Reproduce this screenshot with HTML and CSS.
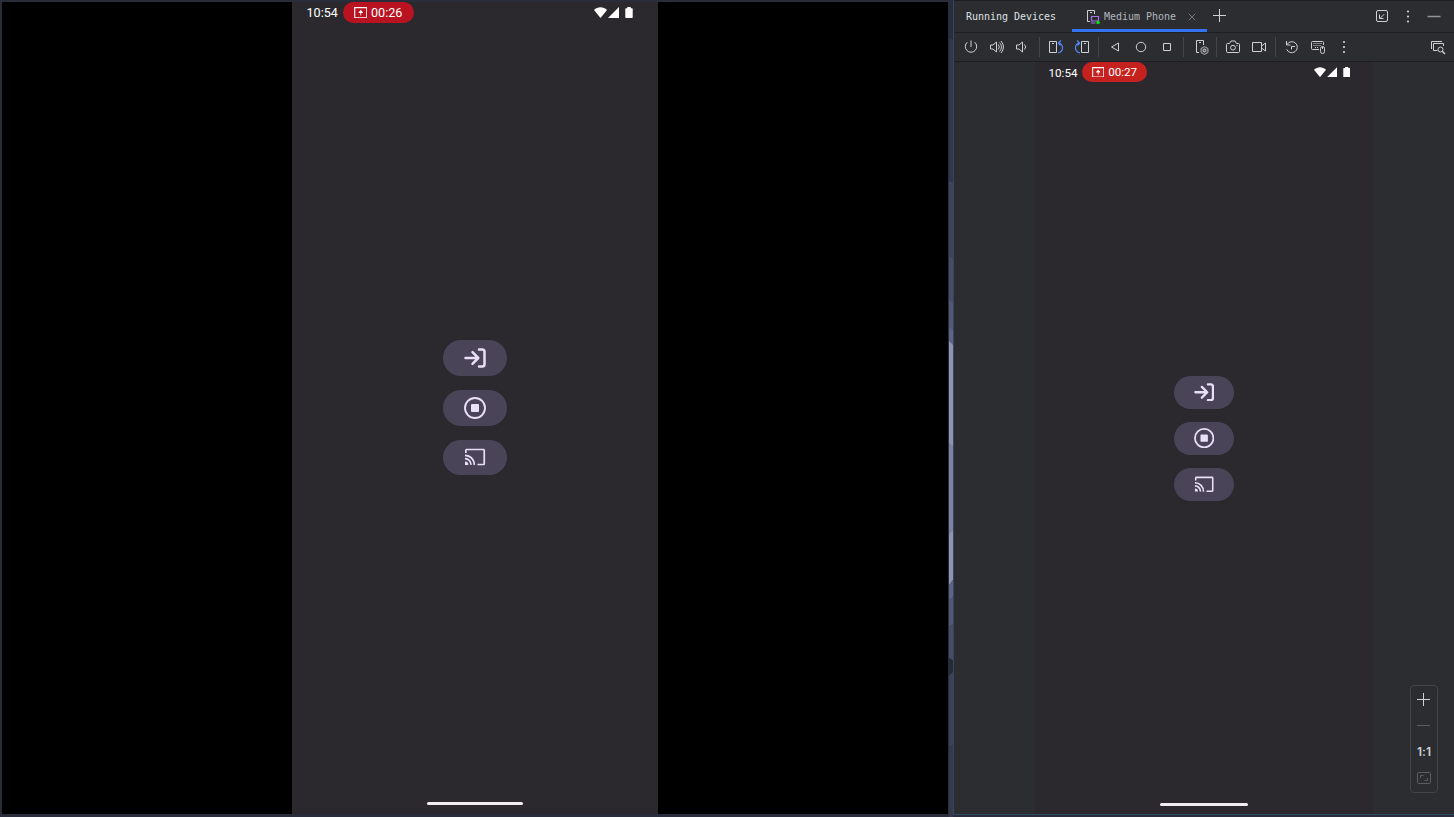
FILE: index.html
```html
<!DOCTYPE html>
<html lang="en">
<head>
<meta charset="utf-8">
<title>Running Devices</title>
<link rel="stylesheet" href="styles.css">
</head>
<body>
<svg class="defs" width="0" height="0">
  <symbol id="share" viewBox="0 0 14 12"><path d="M.7 .7h12.600v10.600H.7z" fill="none" stroke="#fff" stroke-width="1.200"/><path d="M7 3.500V8.800M4.900 5.700 7 3.700l2.100 2z" fill="#fff" stroke="#fff" stroke-width=".9"/></symbol>
  <symbol id="wifi" viewBox="0 0 13 11"><path d="M6.5 11 0 3C3.5-.7 9.5-.7 13 3z" fill="#fff"/></symbol>
  <symbol id="signal" viewBox="0 0 11 11"><path d="M11 0v11H0z" fill="#fff"/></symbol>
  <symbol id="battery" viewBox="0 0 8 11"><path d="M2.3 0h3.4v1.2H7q.7 0 .7.7v8.4q0 .7-.7.7H1q-.7 0-.7-.7V1.900q0-.7.7-.7h1.300z" fill="#fff"/></symbol>
  <symbol id="login" viewBox="0 0 22 20"><g fill="none" stroke="#eadff8" stroke-width="2.500" stroke-linecap="round" stroke-linejoin="round"><path d="M1.500 10H14M8.500 4.200 14.300 10 8.500 15.800M15 1.500h3.200q2.300 0 2.300 2.300v12.400q0 2.300-2.300 2.300H15"/></g></symbol>
  <symbol id="stop" viewBox="0 0 22 22"><circle cx="11" cy="11" r="10" fill="none" stroke="#eadff8" stroke-width="1.900"/><rect x="7" y="7" width="8" height="8" rx="1" fill="#eadff8"/></symbol>
  <symbol id="cast" viewBox="0 0 22 18"><g fill="none" stroke="#eadff8" stroke-width="1.700"><path d="M1.850 5V2.200q0-.7.7-.7h17q.7 0 .7.700v13.600q0 .7-.7.700H13.500"/><path d="M1 7.300A9.200 9.200 0 0 1 10.200 16.900M1 10.700A6 6 0 0 1 7 16.900"/></g><path d="M1 13.600a3.300 3.300 0 0 1 3.300 3.300H1z" fill="#eadff8"/></symbol>
</svg>
<div class="desktop">
  <section class="mirror">
    <div class="screen large">
      <header class="status">
        <span class="clock">10:54</span>
        <span class="rec"><svg class="share"><use href="#share"/></svg><span class="time">00:26</span></span>
        <span class="signals"><svg class="wifi"><use href="#wifi"/></svg><svg class="cell"><use href="#signal"/></svg><svg class="battery"><use href="#battery"/></svg></span>
      </header>
      <main class="actions">
        <button class="action"><svg class="login"><use href="#login"/></svg></button>
        <button class="action"><svg class="stop"><use href="#stop"/></svg></button>
        <button class="action"><svg class="cast"><use href="#cast"/></svg></button>
      </main>
      <div class="navbar"></div>
    </div>
  </section>
  <svg class="wallpaper" width="4" height="817" viewBox="0 0 4 817">
    <path d="M0 0h4v817H0z" fill="#2b2d3d"/>
    <path d="M0 38l4 2v143H0z" fill="#34364a"/>
    <path d="M0 181l4 2v77H0z" fill="#41425c"/>
    <path d="M0 256l4 3v46H0z" fill="#4a4c66"/>
    <path d="M0 300l4 3v30H0z" fill="#555776"/>
    <path d="M0 327l4 3v17H0z" fill="#606385"/>
    <path d="M0 341l4 4v102H0z" fill="#9293b1"/>
    <path d="M0 443l4 3v88H0z" fill="#7f81a2"/>
    <path d="M0 534l4-3v49l-4 5z" fill="#9293b1"/>
    <path d="M0 585l4-5v17l-4 3z" fill="#606385"/>
    <path d="M0 600l4-3v27l-4 3z" fill="#555776"/>
    <path d="M0 627l4-3v37l-4-2z" fill="#4a4c66"/>
    <path d="M0 658l4 2v12l-4 4z" fill="#282a36"/>
    <path d="M0 676l4-4v73l-4 2z" fill="#3f4059"/>
    <path d="M0 747l4-2v72H0z" fill="#36384c"/>
  </svg>
  <section class="ide">
    <header class="tabs">
      <span class="title"><span class="mono">Running Devices</span></span>
      <div class="tab">
        <svg width="16" height="16" viewBox="0 0 16 16" fill="none"><path d="M5 12.500H2.500V1.500h7V5M5 3.500h2" stroke="#ced0d6"/><path d="M6.500 7.500h7v4.500h-7zM6 14h4.500" stroke="#a571e6" stroke-width="1.200"/><circle cx="13" cy="13.500" r="1.800" fill="#0be00b"/></svg>
        <span class="mono">Medium Phone</span>
        <svg class="close" width="8" height="8" viewBox="0 0 8 8"><path d="m.7.7 6.600 6.600m0-6.600L.7 7.300" stroke="#74767b"/></svg>
      </div>
      <svg class="add" width="14" height="14" viewBox="0 0 14 14"><path d="M6.500 0v13M0 6.500h13" stroke="#ced0d6"/></svg>
      <div class="window-tools">
        <svg width="14" height="14" viewBox="0 0 14 14" fill="none" stroke="#ced0d6"><rect x="1.500" y=".5" width="11" height="11" rx="1.500"/><path d="M9.200 4.200l-4 4M4.500 4.500v4H8.500"/></svg>
        <svg width="14" height="14" viewBox="0 0 14 14" fill="#ced0d6"><circle cx="7" cy="1.500" r="1.100"/><circle cx="7" cy="6.500" r="1.100"/><circle cx="7" cy="11.500" r="1.100"/></svg>
        <svg width="14" height="14" viewBox="0 0 14 14"><path d="M.5 6.500h13" stroke="#929498" stroke-width="1.500"/></svg>
      </div>
    </header>
    <nav class="toolbar">
      <svg class="tool" viewBox="0 0 16 16"><path d="M8 1.500v6.500M4.300 3.200a5.700 5.700 0 1 0 7.400 0"/></svg>
      <svg class="tool" viewBox="0 0 16 16"><path d="M1.500 6v4h2.500l3.500 3V3L4 6zM9.300 5.500q2 2.500 0 5M10.500 3.500q4 4.500 0 9M12 2q5 6 0 12"/></svg>
      <svg class="tool tight" viewBox="0 0 16 16"><path d="M2.500 6v4H5l3.500 3V3L5 6zM10.500 5.500q2.500 2.500 0 5"/></svg>
      <i class="sep"></i>
      <svg class="tool" viewBox="0 0 16 16"><path d="M1.500 2.500h7v11h-7zM4 4.500h2"/><path class="blue" d="M10 14q4.500-1 4.500-5.200T10.500 4M13 1.500 10.300 4l2.200 2.700"/></svg>
      <svg class="tool" viewBox="0 0 16 16"><path d="M7.500 2.500h7v11h-7zM10 4.500h2"/><path class="blue" d="M6 14q-4.500-1-4.500-5.200T5.500 4M3 1.500 5.700 4 3.500 6.700"/></svg>
      <i class="sep"></i>
      <svg class="tool" viewBox="0 0 16 16"><path d="M11.500 4v8L4.500 8z"/></svg>
      <svg class="tool" viewBox="0 0 16 16"><circle cx="8" cy="8" r="4.700"/></svg>
      <svg class="tool" viewBox="0 0 16 16"><path d="M4.500 4.500h7v7h-7z"/></svg>
      <i class="sep wide"></i>
      <svg class="tool" viewBox="0 0 16 16"><path d="M6 13.500H3.500v-12h7V6M6 3.500h2"/><path class="gray" d="m11.500 7.500 3.500 2v4l-3.500 2-3.500-2v-4z"/><circle cx="11.500" cy="11.500" r="1.300"/></svg>
      <i class="sep narrow"></i>
      <svg class="tool" viewBox="0 0 16 16"><path d="M2.500 4.500h2l1.500-2.500h4l1.500 2.500h2q1 0 1 1v7q0 1-1 1h-11q-1 0-1-1v-7q0-1 1-1z"/><circle cx="8" cy="8.700" r="2.400"/><path d="M11.500 6.500h1"/></svg>
      <svg class="tool" viewBox="0 0 16 16"><path d="M1.500 3.500h9v9h-9zM10.500 7l4-3v8l-4-3"/></svg>
      <i class="sep"></i>
      <svg class="tool" viewBox="0 0 16 16"><path d="M2.500 2v4h4M3 5.500a5.500 5.500 0 1 1-.3 4.800M11 7.500H7.500V10.500"/></svg>
      <svg class="tool" viewBox="0 0 16 16"><path d="M9 10.500H2.500q-1 0-1-1v-6q0-1 1-1h10q1 0 1 1V6"/><path d="M3.500 4.500h8.500M3.500 6.500h7M5 8.500h4" stroke-dasharray="1 1"/><rect x="10.500" y="7.500" width="4" height="7" rx="2"/><path d="M12.500 8v2"/></svg>
      <svg class="tool dots" viewBox="0 0 16 16"><circle cx="8" cy="3" r="1.100"/><circle cx="8" cy="8" r="1.100"/><circle cx="8" cy="13" r="1.100"/></svg>
      <svg class="tool last" viewBox="0 0 16 16"><path d="M1.500 10V2.500H12M7.500 11.500h-4v-7h10V7"/><circle cx="10.500" cy="10.500" r="2.500"/><path d="m12.300 12.300 2.700 2.700" stroke-width="1.400"/></svg>
    </nav>
    <div class="stage">
      <div class="screen small">
        <header class="status">
          <span class="clock">10:54</span>
          <span class="rec"><svg class="share"><use href="#share"/></svg><span class="time">00:27</span></span>
          <span class="signals"><svg class="wifi"><use href="#wifi"/></svg><svg class="cell"><use href="#signal"/></svg><svg class="battery"><use href="#battery"/></svg></span>
        </header>
        <main class="actions">
          <button class="action"><svg class="login"><use href="#login"/></svg></button>
          <button class="action"><svg class="stop"><use href="#stop"/></svg></button>
          <button class="action"><svg class="cast"><use href="#cast"/></svg></button>
        </main>
        <div class="navbar"></div>
      </div>
      <aside class="zoom">
        <svg width="14" height="14" viewBox="0 0 14 14"><path d="M6.500 0v13M0 6.500h13" stroke="#ced0d6"/></svg>
        <svg width="14" height="14" viewBox="0 0 14 14"><path d="M0 6.500h13" stroke="#5a5d61"/></svg>
        <span class="ratio">1:1</span>
        <svg width="14" height="14" viewBox="0 0 14 14" fill="none" stroke="#5a5d61"><rect x=".5" y="1.500" width="13" height="11" rx="1"/><path d="M3.500 7V4.500H6.500M7.500 9.500h3V7"/></svg>
      </aside>
    </div>
  </section>
</div>
</body>
</html>
```
FILE: styles.css
```css
* { box-sizing: border-box; }
body { margin: 0; background: #2b2d3d; overflow: hidden; }
svg { display: block; flex: none; }
.defs { position: absolute; }
.desktop { display: flex; width: 1454px; height: 817px; }

.mirror {
  display: flex;
  justify-content: center;
  width: 949px;
  height: 815px;
  padding-right: 1px;
  background: #000;
  border: solid #292c39;
  border-width: 2px 1px 1px 2px;
}

/* --k scales the phone contents to its window */
.screen { --k: 1; display: flex; flex-direction: column; align-items: center; background: #2b292d; }
.large { width: 366px; height: 812px; }
.small { --k: .925; width: 338px; height: 752px; margin-left: 81px; }

.status {
  display: flex;
  align-items: center;
  align-self: stretch;
  height: calc(21px * var(--k));
  padding: 0 calc(25px * var(--k)) 0 calc(15px * var(--k));
  font: calc(12.6px * var(--k))/14px Roboto, sans-serif;
  color: #fff;
}
.clock { width: calc(36px * var(--k)); padding-top: 1px; }
.time { padding-top: 1px; }
.rec {
  display: flex;
  align-items: center;
  gap: calc(4px * var(--k));
  width: calc(71px * var(--k));
  height: calc(21px * var(--k));
  padding-left: calc(11px * var(--k));
  border-radius: 99px;
  background: #b91220;
}
.small .rec { background: #c5221f; }
.small .status { height: 20px; padding-left: 13.5px; padding-right: 23px; }
.share { width: calc(13.5px * var(--k)); height: calc(11.5px * var(--k)); }
.signals { display: flex; margin-left: auto; }
.wifi { width: calc(13px * var(--k)); height: calc(11px * var(--k)); margin-right: calc(1px * var(--k)); }
.cell { width: calc(11px * var(--k)); height: calc(11px * var(--k)); margin-right: calc(6px * var(--k)); }
.battery { width: calc(8px * var(--k)); height: calc(11px * var(--k)); }

.actions {
  display: flex;
  flex-direction: column;
  justify-content: center;
  gap: calc(14.2px * var(--k));
  flex: 1;
  padding-bottom: calc(9.4px * var(--k));
}
.action {
  display: flex;
  align-items: center;
  justify-content: center;
  width: calc(64px * var(--k));
  height: calc(35.5px * var(--k));
  padding: 0;
  border: 0;
  border-radius: 99px;
  background: #4a4458;
}
.login { width: calc(22px * var(--k)); height: calc(20px * var(--k)); }
.stop { width: calc(22px * var(--k)); height: calc(22px * var(--k)); }
.cast { width: calc(22px * var(--k)); height: calc(18px * var(--k)); }
.navbar {
  width: calc(96px * var(--k));
  height: 3px;
  margin-bottom: 9px;
  border-radius: 2px;
  background: #f1edf1;
}
.small .navbar { margin-bottom: 8px; }

.ide {
  display: flex;
  flex-direction: column;
  width: 501px;
  height: 815px;
  background: #2b2d30;
  border: solid #2c4b63;
  border-width: 0 0 1px 1px;
}
.tabs { display: flex; height: 33px; border-top: 1px solid #1e1f22; border-bottom: 1px solid #1e1f22; }
.title { display: flex; align-items: center; width: 118px; padding-left: 12px; color: #dfe1e5; }
.mono {
  width: 73px;
  font: 11px/14px "DejaVu Sans Mono", monospace;
  white-space: nowrap;
  transform: scaleX(.906);
  transform-origin: 0 50%;
}
.tab {
  display: flex;
  align-items: center;
  width: 135px;
  padding-left: 13px;
  border-bottom: 3px solid #3574f0;
  padding-top: 3px;
  color: #b4b8bf;
}
.tab .mono { margin-left: 3px; }
.close { margin-left: 11px; }
.add { margin: 8px 0 0 6px; }
.window-tools { display: flex; align-items: center; gap: 12px; margin: 0 13px 0 auto; }

.toolbar { display: flex; align-items: center; height: 29px; padding-left: 4px; border-bottom: 1px solid #1e1f22; }
.tool { width: 26px; height: 16px; fill: none; stroke: #ced0d6; }
.tight { margin-left: -1px; margin-right: 1px; }
.tool .blue { stroke: #548af7; stroke-width: 1.2; }
.tool .gray { stroke: #a4a6aa; fill: #4a4c50; }
.dots { fill: #ced0d6; stroke: none; }
.last { margin: 0 3px 0 auto; }
.sep { flex: none; width: 1px; height: 20px; margin: 0 3px; background: #43454a; }
.wide { margin-right: 4px; }
.narrow { margin: 0 3px 0 2px; }

.stage { display: flex; align-items: flex-end; flex: 1; }
.zoom {
  display: flex;
  flex-direction: column;
  align-items: center;
  justify-content: space-between;
  width: 28px;
  height: 108px;
  margin: 0 16px 21px auto;
  padding: 7px 0;
  border: 1px solid #43454a;
  border-radius: 4px;
}
.ratio { padding-top: 1px; font: 600 12px/14px Inter, sans-serif; font-feature-settings: "calt" 0; color: #ced0d6; }
```
